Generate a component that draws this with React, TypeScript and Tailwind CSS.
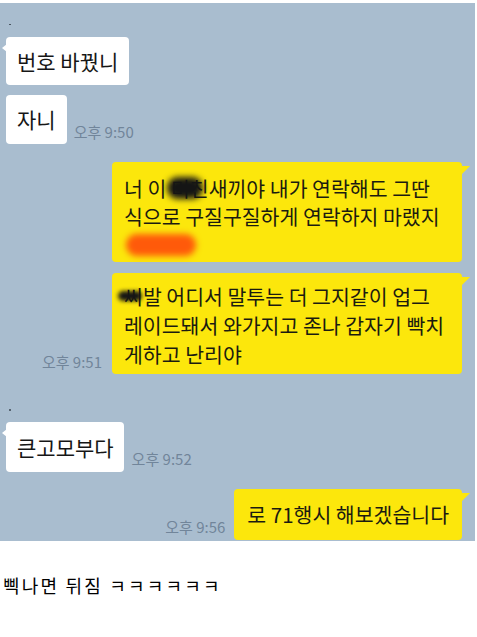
import React from 'react';

const kr = { fontFamily: '"Noto Sans CJK KR", "Noto Sans", sans-serif' };

const Blur = ({ className }: { className: string }) => (
  <span className={`pointer-events-none absolute rounded-full ${className}`} />
);

const Time = ({ t, className = '' }: { t: string; className?: string }) => (
  <span className={`text-[15px] leading-none text-[#71859a] whitespace-nowrap ${className}`}>{t}</span>
);

const WhiteBubble = ({ children, tail }: { children: React.ReactNode; tail?: boolean }) => (
  <div className="relative rounded-[4px] bg-white text-[21px] leading-none text-[#161616] flex items-center whitespace-nowrap">
    {tail && (
      <span className="absolute -left-[4px] top-[7px] w-0 h-0 border-t-[4px] border-b-[4px] border-r-[5px] border-t-transparent border-b-transparent border-r-white" />
    )}
    {children}
  </div>
);

const YellowBubble = ({ children, className = '' }: { children: React.ReactNode; className?: string }) => (
  <div className={`relative rounded-[4px] bg-[#fce70c] text-[20.5px] text-[#1b1b10] ${className}`}>
    <span className="absolute -right-[8px] top-[4px] w-0 h-0 border-t-[9px] border-r-[9px] border-t-[#fce70c] border-r-transparent" />
    {children}
  </div>
);

const Dot = () => <div className="ml-[9px] w-[2px] h-[2px] rounded-full bg-[#3b4650]" />;

export default function App() {
  return (
    <div className="w-[477px] min-h-[637px] bg-white pt-[3px]" style={kr}>
      <div className="bg-[#a9bdcf] mr-[2px] pt-[21px] pb-[1px] flex flex-col overflow-hidden h-[538px]">
        <Dot />

        <div className="mt-[12px] ml-[6px] flex">
          <WhiteBubble tail>
            <span className="h-[48px] pl-[11px] pr-[11px] flex items-center">번호 바꿨니</span>
          </WhiteBubble>
        </div>

        <div className="mt-[10px] ml-[6px] flex items-end gap-[7px]">
          <WhiteBubble>
            <span className="h-[49px] pl-[11px] pr-[11px] flex items-center">자니</span>
          </WhiteBubble>
          <Time t="오후 9:50" className="mb-[5px]" />
        </div>

        <div className="mt-[18px] mr-[13px] flex justify-end">
          <YellowBubble className="w-[350px] h-[100px] pl-[12px] pt-[12px] leading-[28px]">
            <div className="whitespace-nowrap">
              너 이{' '}
              <span className="relative">
                미친
                <Blur className="left-[-4px] top-[4px] w-[36px] h-[22px] bg-[#151515] blur-[3px]" />
              </span>
              새끼야 내가 연락해도 그딴
            </div>
            <div className="whitespace-nowrap">식으로 구질구질하게 연락하지 마랬지</div>
            <div className="relative h-[28px]">
              <Blur className="left-[2px] top-[4px] w-[70px] h-[22px] bg-[#ff5a0a] blur-[3px]" />
            </div>
          </YellowBubble>
        </div>

        <div className="mt-[11px] mr-[13px] flex justify-end items-end gap-[10px]">
          <Time t="오후 9:51" className="mb-[5px]" />
          <YellowBubble className="w-[350px] h-[101px] pl-[12px] pt-[9px] leading-[29px]">
            <div className="whitespace-nowrap">
              <span className="relative">
                씨
                <Blur className="left-[-6px] top-[10px] w-[24px] h-[10px] bg-[#151515] blur-[2px]" />
              </span>
              발 어디서 말투는 더 그지같이 업그
            </div>
            <div className="whitespace-nowrap">레이드돼서 와가지고 존나 갑자기 빡치</div>
            <div className="whitespace-nowrap">게하고 난리야</div>
          </YellowBubble>
        </div>

        <div className="mt-[35px]">
          <Dot />
        </div>

        <div className="mt-[11px] ml-[6px] flex items-end gap-[8px]">
          <WhiteBubble tail>
            <span className="h-[50px] pl-[11px] pr-[10px] flex items-center">큰고모부다</span>
          </WhiteBubble>
          <Time t="오후 9:52" className="mb-[6px]" />
        </div>

        <div className="mt-[17px] mr-[13px] flex justify-end items-end gap-[9px]">
          <Time t="오후 9:56" className="mb-[6px]" />
          <YellowBubble className="h-[51px] pl-[13px] pr-[13px] flex items-center leading-none whitespace-nowrap">
            로 71행시 해보겠습니다
          </YellowBubble>
        </div>
      </div>

      <p className="mt-[35px] ml-[3px] text-[18px] tracking-[2.2px] leading-none text-black" style={{ fontFamily: '"Noto Sans CJK KR", sans-serif' }}>
        삑나면 뒤짐 ㅋㅋㅋㅋㅋㅋ
      </p>
    </div>
  );
}
